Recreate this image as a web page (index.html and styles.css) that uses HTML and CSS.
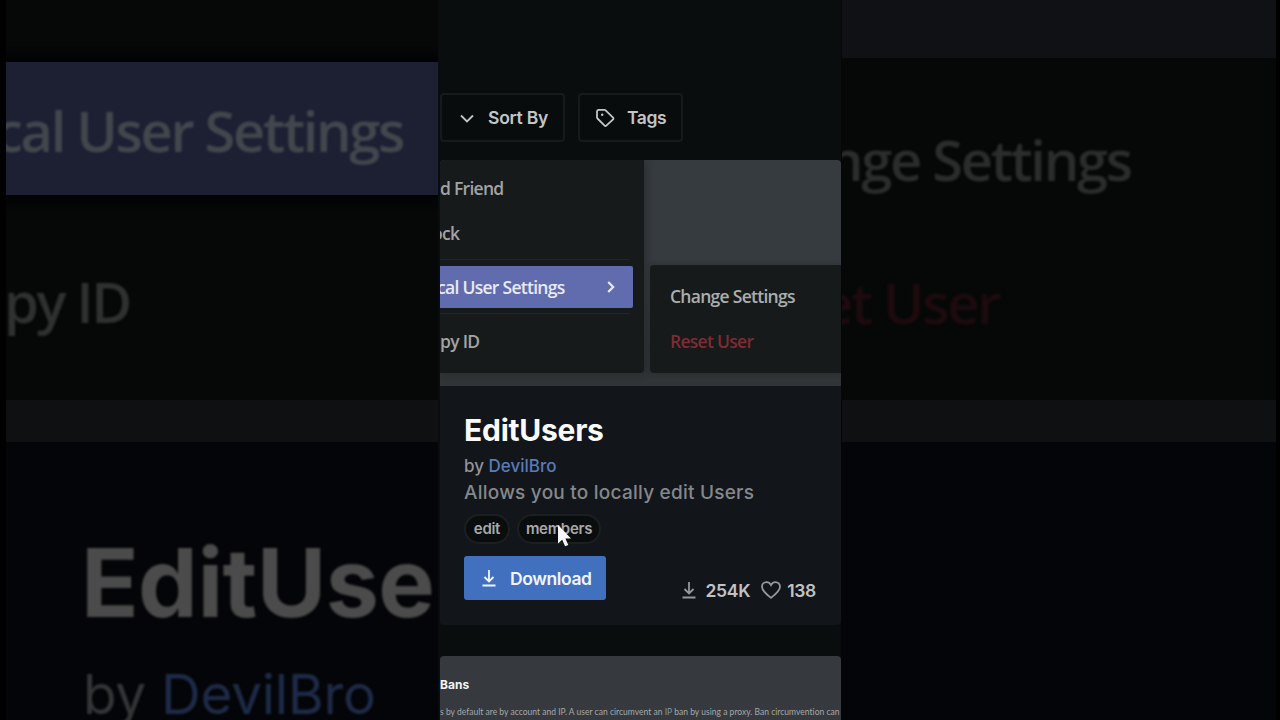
FILE: index.html
```
<!DOCTYPE html>
<html lang="en">
<head>
    <meta charset="utf-8">
    <title>EditUsers</title>
    <link rel="stylesheet" href="styles.css">
</head>
<body>
    <div class="stage">
        <div class="side side-left">
            <div class="big-top"></div>
            <div class="big-active"><span class="big-menu">cal User Settings</span></div>
            <div class="big-panel"><span class="big-menu big-copy">py ID</span></div>
            <div class="big-band"></div>
            <div class="big-body">
                <div class="big-title">EditUse</div>
                <div class="big-author">by <span class="big-link">DevilBro</span></div>
            </div>
        </div>

        <main class="phone">
            <div class="toolbar">
                <button class="filter filter-sort">
                    <svg width="20" height="20" viewBox="0 0 20 20"><path d="M4 7.500l6 6 6-6"/></svg>
                    <span>Sort By</span>
                </button>
                <button class="filter filter-tags">
                    <svg width="20" height="20" viewBox="0 0 20 20"><path d="M2 3.800v5.500c0 .5.2.9.5 1.200l7.100 7.100c.5.5 1.200.5 1.700 0l6.800-6.300c.5-.5.5-1.200 0-1.700L10.600 2.300c-.3-.3-.7-.5-1.200-.5H3.800C2.800 1.800 2 2.700 2 3.800z"/><circle class="dot" cx="7.200" cy="6.800" r="1.200"/></svg>
                    <span>Tags</span>
                </button>
            </div>

            <div class="card">
                <div class="preview">
                    <div class="menu">
                        <div class="item item-friend"><span>d Friend</span></div>
                        <div class="item item-block"><span>ock</span></div>
                        <div class="line"></div>
                        <div class="item item-active">
                            <span>cal User Settings</span>
                            <svg width="10" height="14" viewBox="0 0 10 14"><path d="M2.200 2l5 5-5 5"/></svg>
                        </div>
                        <div class="line"></div>
                        <div class="item item-copy"><span>py ID</span></div>
                    </div>
                    <div class="submenu">
                        <div class="item item-change"><span>Change Settings</span></div>
                        <div class="item item-reset"><span>Reset User</span></div>
                    </div>
                </div>
                <div class="info">
                    <h1>EditUsers</h1>
                    <div class="author">by <a>DevilBro</a></div>
                    <p>Allows you to locally edit Users</p>
                    <div class="tags">
                        <span class="tag tag-edit">edit</span>
                        <span class="tag tag-members">members
                            <svg class="cursor" width="16" height="24" viewBox="0 0 16 24"><path d="M1 1v18.500l4.200-3.800 2.900 6.600 3.200-1.400-2.900-6.300H14z"/></svg>
                        </span>
                    </div>
                    <div class="actions">
                        <button class="download">
                            <svg width="16" height="18" viewBox="0 0 16 18"><path d="M8 1v11M3.500 8L8 12.500 12.500 8M1.500 16.500h13"/></svg>
                            <span>Download</span>
                        </button>
                        <div class="stats">
                            <svg width="16" height="18" viewBox="0 0 16 18"><path d="M8 1v11M3.500 8L8 12.500 12.500 8M1.500 16.500h13"/></svg>
                            <span class="count">254K</span>
                            <svg class="heart" width="20" height="18" viewBox="0 0 20 18"><path d="M10 16.800C5.500 13.300 1 10 1 5.800 1 3 3 1.200 5.400 1.200c1.900 0 3.600 1 4.600 2.900 1-1.900 2.700-2.900 4.600-2.900C17 1.200 19 3 19 5.800c0 4.200-4.500 7.500-9 11z"/></svg>
                            <span>138</span>
                        </div>
                    </div>
                </div>
            </div>

            <div class="card next">
                <div class="next-title">Bans</div>
                <div class="next-text"><span>s by default are by account and IP. A user can circumvent an <b>IP</b> ban by using a proxy. Ban circumvention can</span></div>
            </div>
        </main>

        <div class="side side-right">
            <div class="right-top"></div>
            <div class="right-panel">
                <span class="big-menu right-change">nge Settings</span>
                <span class="big-menu right-reset">et User</span>
            </div>
            <div class="big-band"></div>
        </div>
    </div>
</body>
</html>
```
FILE: styles.css
```
* {
    box-sizing: border-box;
}
body {
    margin: 0;
    background-color: #000;
    font-family: Inter, sans-serif;
}
.stage {
    display: grid;
    grid-template-columns: 438px 403px 439px;
    width: 1280px;
    height: 720px;
    overflow: hidden;
}
button {
    font-family: inherit;
    padding: 0;
}
svg {
    fill: none;
    stroke: currentColor;
    stroke-width: 1.8;
    flex: none;
}

/* enlarged backdrop */
.side {
    height: 720px;
    overflow: hidden;
    white-space: nowrap;
    background-color: #040508;
}
.side-left {
    border-left: 6px solid #010101;
}
.side-right {
    border-left: 1px solid #050606;
    border-right: 4px solid #000;
}
.big-top {
    height: 62px;
    background: linear-gradient(#060808 45px, #010204 61px);
}
.big-active {
    height: 133px;
    background-color: #1d2033;
    overflow: hidden;
}
.big-menu {
    display: block;
    font-family: "Open Sans", sans-serif;
    font-weight: 600;
    font-size: 56px;
    line-height: 80px;
    letter-spacing: -2.300px;
    filter: blur(1.2px);
}
.big-active .big-menu {
    margin: 28px 0 0 -11px;
    color: #42474d;
}
.big-panel {
    height: 205px;
    padding-top: 66px;
    background: linear-gradient(#010203, #060807 18px);
}
.big-copy {
    margin-left: -2px;
    color: #2f3030;
}
.big-band {
    height: 42px;
    background-color: #0e1012;
}
.big-title {
    margin: 84px 0 0 75px;
    font-weight: 700;
    font-size: 95px;
    line-height: 114px;
    letter-spacing: -0.600px;
    color: #4b4b4b;
    filter: blur(1px);
}
.big-author {
    margin: 19px 0 0 77px;
    font-size: 55px;
    line-height: 70px;
    letter-spacing: -0.300px;
    color: #343536;
    filter: blur(1px);
}
.big-link {
    color: #1e2b48;
}
.right-top {
    height: 58px;
    background-color: #101114;
}
.right-panel {
    height: 342px;
    padding-top: 61px;
    background-color: #060807;
    overflow: hidden;
}
.right-change {
    margin-left: -14px;
    color: #2b2c2c;
}
.right-reset {
    margin: 63px 0 0 -21px;
    color: #1d0b0e;
}

/* page */
.phone {
    height: 720px;
    padding-left: 2px;
    overflow: hidden;
    background-color: #0a0d0e;
}
.toolbar {
    display: flex;
    gap: 13px;
    padding-top: 93px;
}
.filter {
    display: flex;
    align-items: center;
    height: 49px;
    border: 2px solid #171a1b;
    border-radius: 4px;
    background-color: #090c0d;
    color: #c3c5c6;
    font-weight: 600;
    font-size: 17.500px;
    letter-spacing: -0.250px;
}
.filter-sort {
    width: 125px;
    padding-left: 15px;
    gap: 11px;
}
.filter-tags {
    width: 105px;
    padding-left: 15px;
    gap: 12px;
    letter-spacing: -0.400px;
}
.dot {
    fill: currentColor;
    stroke: none;
}
.card {
    margin-top: 18px;
    border-radius: 4px;
    overflow: hidden;
    background-color: #12151a;
}
.preview {
    display: flex;
    gap: 6px;
    height: 226px;
    background: linear-gradient(#363b3f 100px, #303437);
    font-family: "Open Sans", sans-serif;
    font-weight: 600;
    font-size: 17.500px;
    letter-spacing: -0.720px;
    color: #a1a3a4;
    white-space: nowrap;
}
.menu {
    width: 204px;
    height: 213px;
    padding-top: 5px;
    border-radius: 0 0 4px 0;
    background-color: #171a1a;
    box-shadow: 2px 0 8px rgba(0, 0, 0, .25);
    overflow: hidden;
}
.item {
    display: flex;
    align-items: center;
    height: 45px;
}
.item-block {
    margin-left: -8px;
}
.line {
    height: 1px;
    margin: 4px 15px 6px 0;
    background-color: #232627;
}
.item-active {
    justify-content: space-between;
    width: 193px;
    height: 42px;
    padding-right: 17px;
    border-radius: 0 2px 2px 0;
    background-color: #606cad;
    color: #e9eaf4;
}
.item-active span {
    margin-left: -3px;
}
.item-active svg {
    stroke-width: 2.200;
}
.item-active + .line {
    margin: 5px 15px 4px 0;
}
.submenu {
    flex: 1;
    height: 108px;
    margin-top: 105px;
    padding: 8px 0 0 20px;
    border-radius: 4px 0 0 4px;
    background-color: #171a1a;
    box-shadow: 0 0 6px rgba(0, 0, 0, .2);
}
.item-change {
    color: #acaeae;
}
.item-reset {
    color: #7e2b34;
}
.info {
    height: 239px;
    padding: 25px 24px 0;
}
h1 {
    margin: 0;
    font-weight: 700;
    font-size: 30px;
    line-height: 38px;
    letter-spacing: -0.250px;
    color: #fafafa;
}
.author {
    margin-top: 5px;
    font-weight: 500;
    font-size: 17px;
    line-height: 24px;
    color: #929496;
}
.author a {
    color: #587bbb;
}
.info p {
    margin: 1px 0 0;
    font-weight: 500;
    font-size: 19px;
    line-height: 28px;
    letter-spacing: 0.230px;
    color: #85888b;
}
.tags {
    display: flex;
    gap: 7px;
    margin-top: 7px;
}
.tag {
    position: relative;
    height: 30px;
    border: 2px solid #1c1f20;
    border-radius: 15px;
    background-color: #0a0d0e;
    color: #a6a8a9;
    font-weight: 600;
    font-size: 15px;
    line-height: 26px;
    letter-spacing: -0.300px;
    text-align: center;
}
.tag-edit {
    width: 46px;
}
.tag-members {
    width: 84px;
}
.cursor {
    position: absolute;
    left: 38px;
    top: 8px;
    stroke: none;
    fill: #f5f6f7;
}
.actions {
    display: flex;
    justify-content: space-between;
    margin-top: 12px;
}
.download {
    display: flex;
    align-items: center;
    gap: 13px;
    width: 142px;
    height: 44px;
    padding-left: 17px;
    border: none;
    border-radius: 3px;
    background-color: #4170be;
    color: #f1f5fb;
    font-weight: 600;
    font-size: 17.500px;
    letter-spacing: -0.400px;
}
.stats {
    display: flex;
    align-items: center;
    height: 24px;
    margin-top: 22px;
    margin-right: 1px;
    gap: 8px;
    color: #c0c2c4;
    font-weight: 600;
    font-size: 17.500px;
    letter-spacing: -0.300px;
}
.stats svg {
    color: #96989a;
}
.count {
    margin-right: 3px;
}
.heart {
    margin-right: -2px;
}
.next {
    height: 70px;
    margin-top: 31px;
    padding-top: 20px;
    background-color: #363a3e;
    white-space: nowrap;
}
.next-title {
    font-weight: 700;
    font-size: 12px;
    line-height: 18px;
    color: #f4f4f5;
}
.next-text {
    margin-top: 11px;
    font-family: Lato, sans-serif;
    font-size: 8.500px;
    line-height: 14px;
    letter-spacing: 0.020px;
    color: #a5a8aa;
}
.next-text b {
    font-weight: 400;
    color: #7e98ac;
}
```
